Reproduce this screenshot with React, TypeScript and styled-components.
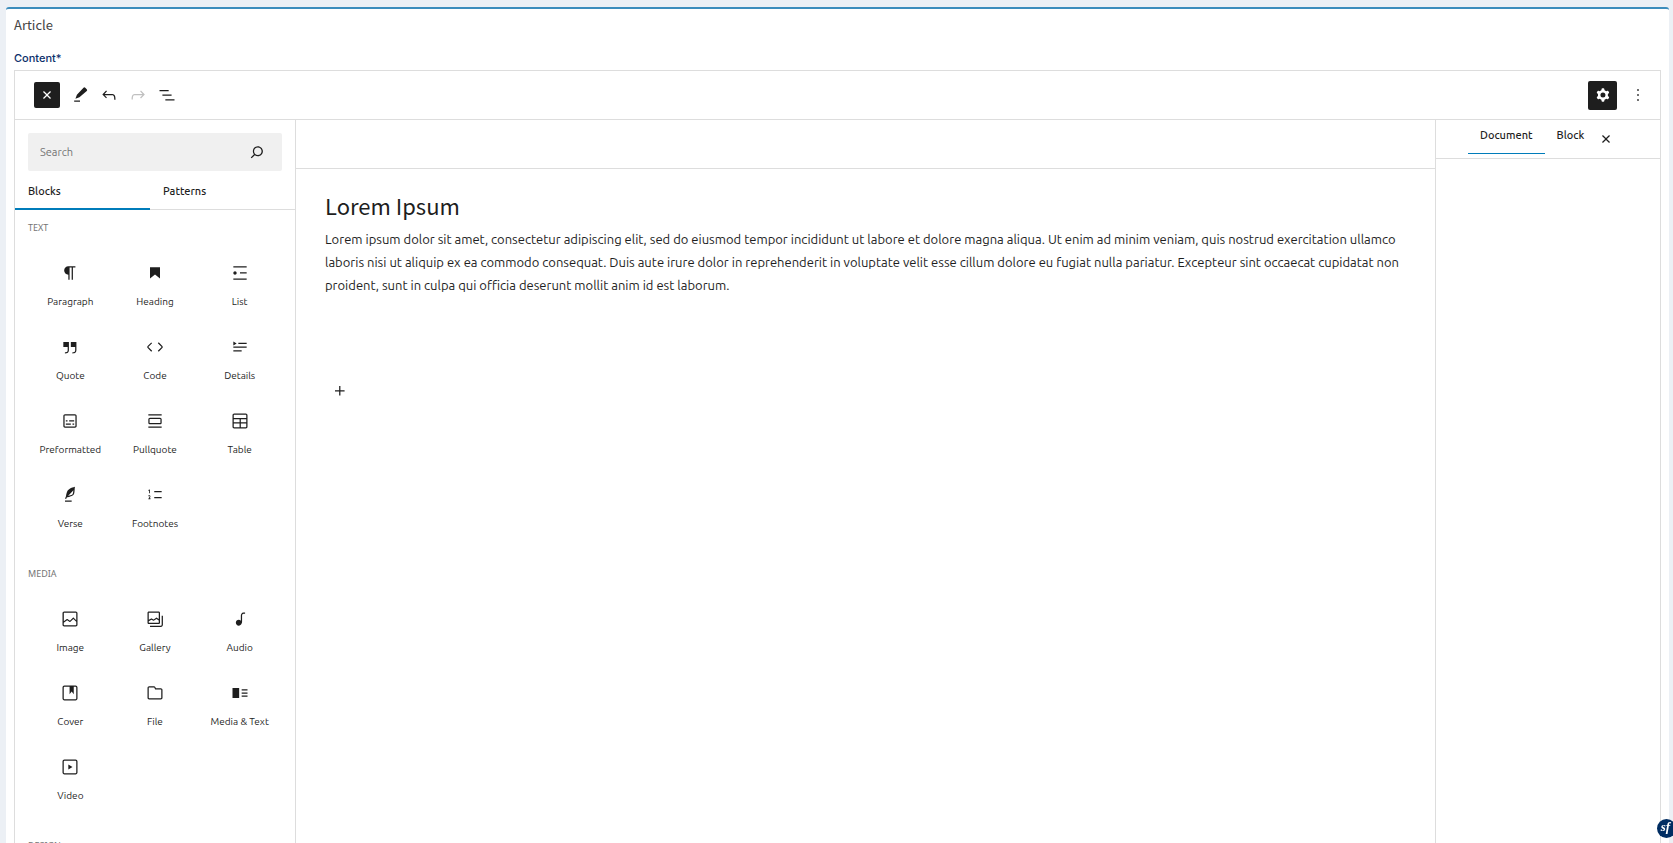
import React from 'react';
import styled, { createGlobalStyle } from 'styled-components';

const UI_FONT = "Ubuntu, 'Noto Sans', 'Open Sans', sans-serif";
const HEADING_FONT = "'Source Sans Pro', 'Noto Sans CJK SC', 'Noto Sans', sans-serif";
const CAPTION_FONT = "'Liberation Sans Narrow', 'Noto Sans', sans-serif";
const LABEL_FONT = 'Inter, Roboto, sans-serif';

const ink = '#1e1e1e';
const line = '#dddddd';
const accent = '#007cba';

const GlobalStyle = createGlobalStyle`
  *, *::before, *::after { box-sizing: border-box; }
  body { margin: 0; background: #ecf0f5; color: ${ink}; font-family: ${UI_FONT}; }
  button, input { font-family: inherit; }
  h1, h2, h3, p { margin: 0; font-weight: 400; }
`;

const Page = styled.div`
  display: flex;
  height: 100vh;
  padding: 7px 4px 0 6px;
  overflow: hidden;
`;

const Card = styled.main`
  display: flex;
  flex: 1;
  flex-direction: column;
  min-width: 0;
  padding: 6px 8px 0;
  background: #fff;
  border-top: 2px solid #3c8dbc;
  border-radius: 3px 3px 0 0;
`;

const CardTitle = styled.h1`
  color: #444;
  font: 400 13px/20px ${HEADING_FONT};
`;

const FieldLabel = styled.h2`
  margin-top: 14px;
  padding-bottom: 3px;
  color: #0b2f6b;
  font: 500 11px/18px ${LABEL_FONT};
`;

const Editor = styled.section`
  display: flex;
  flex: 1;
  flex-direction: column;
  min-height: 0;
  border: 1px solid ${line};
  border-bottom: 0;
`;

const Toolbar = styled.div`
  display: flex;
  flex-shrink: 0;
  align-items: center;
  height: 49px;
  padding: 0 12px 0 19px;
  border-bottom: 1px solid ${line};
`;

const ToolGroup = styled.div`
  display: flex;
  align-items: center;
  gap: 9px;
  margin-left: 10px;
`;

const EndGroup = styled(ToolGroup)`
  gap: 11px;
  margin-left: auto;
`;

const IconButton = styled.button<{ $size?: number; $filled?: boolean }>`
  display: flex;
  flex-shrink: 0;
  align-items: center;
  justify-content: center;
  width: ${({ $size = 20 }) => $size}px;
  height: ${({ $size = 20 }) => $size}px;
  padding: 0;
  background: ${({ $filled }) => ($filled ? ink : 'transparent')};
  border: 0;
  border-radius: 2px;
  color: ${({ $filled }) => ($filled ? '#fff' : ink)};

  &:disabled { color: #c0c0c0; }
`;

const Glyph = styled.svg`
  display: block;
  fill: currentColor;
`;

const Workspace = styled.div`
  display: flex;
  flex: 1;
  min-height: 0;
`;

const Inserter = styled.aside`
  flex: 0 0 281px;
  overflow: hidden;
  border-right: 1px solid ${line};
`;

const SearchBox = styled.div`
  display: flex;
  align-items: center;
  height: 38px;
  margin: 13px 13px 0;
  padding: 0 15px 0 12px;
  background: #f0f0f0;
  border-radius: 2px;
`;

const SearchInput = styled.input`
  flex: 1;
  min-width: 0;
  padding: 0;
  background: transparent;
  border: 0;
  outline: 0;
  color: ${ink};
  font-size: 11px;

  &::placeholder { color: #757575; opacity: 1; }
`;

const InserterTabs = styled.div`
  display: flex;
  height: 39px;
  box-shadow: inset 0 -1px ${line};
`;

const InserterTab = styled.button<{ $active?: boolean }>`
  width: 135px;
  padding: 3px 13px 0;
  background: transparent;
  border: 0;
  border-bottom: 2px solid ${({ $active }) => ($active ? accent : 'transparent')};
  color: ${ink};
  font-size: 11px;
  font-weight: 500;
  text-align: left;
`;

const Group = styled.section`
  padding-bottom: 13px;
`;

const GroupTitle = styled.h3`
  height: 37px;
  padding: 11px 13px 0;
  color: #757575;
  font: 400 9px/14px ${CAPTION_FONT};
  text-transform: uppercase;
`;

const BlockGrid = styled.ul`
  display: grid;
  grid-template-columns: repeat(3, 1fr);
  grid-auto-rows: 74px;
  margin: 0;
  padding: 0 13px;
  list-style: none;
`;

const BlockButton = styled.button`
  display: flex;
  flex-direction: column;
  align-items: center;
  width: 100%;
  height: 74px;
  padding: 16px 0 0;
  background: transparent;
  border: 0;
  color: ${ink};
  font-size: 10px;
  line-height: 14px;
  white-space: nowrap;
`;

const BlockName = styled.span`
  margin-top: 12px;
`;

const Canvas = styled.div`
  flex: 1;
  min-width: 0;
`;

const CanvasBar = styled.div`
  height: 49px;
  border-bottom: 1px solid ${line};
`;

const Content = styled.article`
  padding: 20px 29px;
`;

const ContentTitle = styled.h2`
  font: 400 22px/32px ${HEADING_FONT};
`;

const Paragraph = styled.p`
  margin-top: 7px;
  font-size: 13px;
  line-height: 23px;
`;

const Appender = styled.div`
  padding: 84px 5px 0;
`;

const Settings = styled.aside`
  flex: 0 0 225px;
  border-left: 1px solid ${line};
`;

const SettingsTabs = styled.div`
  display: flex;
  align-items: flex-start;
  height: 39px;
  padding-left: 32px;
  border-bottom: 1px solid ${line};
`;

const SettingsTab = styled.button<{ $active?: boolean }>`
  height: 34px;
  padding: 0 12px 3px;
  background: transparent;
  border: 0;
  border-bottom: 1px solid ${({ $active }) => ($active ? accent : 'transparent')};
  color: ${ink};
  font-size: 11px;
  font-weight: 500;
`;

const SettingsClose = styled.div`
  padding-top: 9px;
`;

const ProfilerBadge = styled.button`
  position: fixed;
  right: -3px;
  bottom: 5px;
  width: 19px;
  height: 19px;
  padding: 0 2px 3px 0;
  background: #002d62;
  border: 0;
  border-radius: 50%;
  color: #fff;
  font: italic 700 13px/14px 'Liberation Serif', serif;
`;

const paths = {
  close: 'M12 13.06l3.712 3.713 1.061-1.06L13.061 12l3.712-3.712-1.06-1.06L12 10.938 8.288 7.227l-1.061 1.06L10.939 12l-3.712 3.712 1.06 1.061L12 13.061z',
  edit: 'm20.1 5.1-1.8-1.8a1.5 1.5 0 0 0-2.1 0L8.3 11.7 6.5 16.5l4.8-1.8 8.8-7.5a1.5 1.5 0 0 0 0-2.1ZM12 18.5H5V20h7v-1.5Z',
  undo: 'M18.3 11.7c-.6-.6-1.4-.9-2.3-.9H6.7l2.9-3.3-1.1-1-4.5 5L8.5 16l1-1-2.7-2.7H16c.5 0 .9.2 1.3.5 1 1 1 3.4 1 4.5v.3h1.5v-.2c0-1.5 0-4.3-1.5-5.7z',
  redo: 'M15.6 6.5l-1.1 1 2.9 3.3H8c-.9 0-1.7.3-2.3.9-1.4 1.5-1.4 4.2-1.4 5.6v.2h1.5v-.3c0-1.1 0-3.5 1-4.5.3-.3.7-.5 1.3-.5h9.2L14.5 15l1.1 1.1 4.6-4.6-4.6-5z',
  outline: 'M3 6h11v1.5H3V6Zm3.5 5.5h11V13h-11v-1.5ZM21 17H10v1.5h11V17Z',
  cog: 'M10.289 4.836A1 1 0 0111.275 4h1.306a1 1 0 01.987.836l.244 1.466c.787.26 1.503.679 2.108 1.218l1.393-.522a1 1 0 011.216.437l.653 1.13a1 1 0 01-.23 1.273l-1.148.944a6.025 6.025 0 010 2.435l1.149.946a1 1 0 01.23 1.272l-.653 1.13a1 1 0 01-1.216.437l-1.394-.522c-.605.54-1.32.958-2.108 1.218l-.244 1.466a1 1 0 01-.987.836h-1.306a1 1 0 01-.986-.836l-.244-1.466a5.995 5.995 0 01-2.108-1.218l-1.394.522a1 1 0 01-1.217-.436l-.653-1.131a1 1 0 01.23-1.272l1.149-.946a6.026 6.026 0 010-2.435l-1.148-.944a1 1 0 01-.23-1.272l.653-1.131a1 1 0 011.217-.437l1.393.522a5.994 5.994 0 012.108-1.218l.244-1.466zM14.929 12a3 3 0 11-6 0 3 3 0 016 0z',
  more: 'M13 19h-2v-2h2v2zm0-6h-2v-2h2v2zm0-6h-2V5h2v2z',
  search: 'M13 5c-3.3 0-6 2.7-6 6 0 1.4.5 2.7 1.3 3.7l-3.8 3.8 1.1 1.1 3.8-3.8c1 .8 2.3 1.3 3.7 1.3 3.3 0 6-2.7 6-6S16.3 5 13 5zm0 10.5c-2.5 0-4.5-2-4.5-4.5s2-4.5 4.5-4.5 4.5 2 4.5 4.5-2 4.5-4.5 4.5z',
  plus: 'M11 12.5V17.5H12.5V12.5H17.5V11H12.5V6H11V11H6V12.5H11Z',
  paragraph: 'm9.99609 14v-.2251l.00391.0001v6.225h1.5v-14.5h2.5v14.5h1.5v-14.5h3v-1.5h-8.50391c-2.76142 0-5 2.23858-5 5 0 2.7614 2.23858 5 5 5z',
  heading: 'M6 5V18.5911L12 13.8473L18 18.5911V5H6Z',
  list: 'M4 4v1.5h16V4H4zm8 8.5h8V11h-8v1.5zM4 20h16v-1.5H4V20zm4-8c0-1.1-.9-2-2-2s-2 .9-2 2 .9 2 2 2 2-.9 2-2z',
  quote: 'M13 6v6h5.2v4c0 .8-.2 1.4-.5 1.7-.6.6-1.6.6-2.5.5h-.3v1.5h.5c1 0 2.3-.1 3.3-1 .6-.6 1-1.6 1-2.8V6H13zm-9 6h5.2v4c0 .8-.2 1.4-.5 1.7-.6.6-1.6.6-2.5.5h-.3v1.5h.5c1 0 2.3-.1 3.3-1 .6-.6 1-1.6 1-2.8V6H4v6z',
  code: 'M20.8 10.7l-4.3-4.3-1.1 1.1 4.3 4.3c.1.1.1.3 0 .4l-4.3 4.3 1.1 1.1 4.3-4.3c.7-.8.7-1.9 0-2.6zM4.2 11.8l4.3-4.3-1-1-4.3 4.3c-.7.7-.7 1.8 0 2.5l4.3 4.3 1.1-1.1-4.3-4.3c-.2-.1-.2-.3-.1-.4z',
  details: 'M4 16h10v1.5H4V16Zm0-4.5h16V13H4v-1.5ZM10 7h10v1.5H10V7Zm-6-1.75 4 2.5-4 2.5v-5Z',
  preformatted: 'M18 4H6c-1.1 0-2 .9-2 2v12c0 1.1.9 2 2 2h12c1.1 0 2-.9 2-2V6c0-1.1-.9-2-2-2zm.5 14c0 .3-.2.5-.5.5H6c-.3 0-.5-.2-.5-.5V6c0-.3.2-.5.5-.5h12c.3 0 .5.2.5.5v12zM7 16.5h6V15H7v1.5zm4-4h6V11h-6v1.5zM9 11H7v1.5h2V11zm6 5.5h2V15h-2v1.5z',
  pullquote: 'M18 8H6c-1.1 0-2 .9-2 2v4c0 1.1.9 2 2 2h12c1.1 0 2-.9 2-2v-4c0-1.1-.9-2-2-2zm.5 6c0 .3-.2.5-.5.5H6c-.3 0-.5-.2-.5-.5v-4c0-.3.2-.5.5-.5h12c.3 0 .5.2.5.5v4zM4 4v1.5h16V4H4zm0 16h16v-1.5H4V20z',
  table: 'M19 3H5c-1.1 0-2 .9-2 2v14c0 1.1.9 2 2 2h14c1.1 0 2-.9 2-2V5c0-1.1-.9-2-2-2zM5 4.5h14c.3 0 .5.2.5.5v3.5h-15V5c0-.3.2-.5.5-.5zm8 5.5h6.5v3.5H13V10zm-1.5 3.5h-7V10h7v3.5zm-7 5.5v-4h7v4.5H5c-.3 0-.5-.2-.5-.5zm14.5.5h-6V15h6.5v4c0 .3-.2.5-.5.5z',
  verse: 'M17.8 2l-.9.3c-.1 0-3.6 1-5.2 2.1C10 5.5 9.3 6.5 8.9 7.1c-.6.9-1.7 4.7-1.7 6.3l-.9 2.3c-.2.4 0 .8.4 1 .1 0 .2.1.3.1.3 0 .6-.2.7-.5l.6-1.5c.3 0 .7-.1 1.2-.2.7-.1 1.4-.3 2.2-.5.8-.2 1.6-.5 2.4-.8.7-.3 1.4-.7 1.9-1.2s.8-1.2 1-1.9c.2-.7.3-1.6.4-2.4.1-.8.1-1.7.2-2.5 0-.8.1-1.5.2-2.1V2zm-1.9 5.6c-.1.8-.2 1.5-.3 2.1-.2.6-.4 1-.6 1.3-.3.3-.8.6-1.4.9-.7.3-1.4.5-2.2.8-.6.2-1.3.3-1.8.4L15 7.5c.3-.3.6-.7 1-1.1 0 .4 0 .8-.1 1.2zM6 20h8v-1.5H6V20z',
  footnotes: 'M11.1 15.8H20v-1.5h-8.9v1.5zm0-8.6v1.5H20V7.2h-8.9zM5 6.7V10h1V5.3L3.8 6l.4 1 .8-.3zm-.4 5.7c-.3.1-.5.2-.7.3l.1 1.1c.2-.2.5-.4.8-.5.3-.1.6 0 .7.1.2.3 0 .8-.2 1.1-.5.8-.9 1.6-1.4 2.5h2.7v-1h-1c.3-.6.8-1.4.9-2.1.1-.3 0-.8-.2-1.1-.5-.6-1.3-.5-1.7-.4z',
  image: 'M19 3H5c-1.1 0-2 .9-2 2v14c0 1.1.9 2 2 2h14c1.1 0 2-.9 2-2V5c0-1.1-.9-2-2-2zM5 4.5h14c.3 0 .5.2.5.5v8.4l-3-2.9c-.3-.3-.8-.3-1 0L11.9 14 9 12c-.3-.2-.6-.2-.8 0l-3.6 2.6V5c-.1-.3.1-.5.4-.5zm14 15H5c-.3 0-.5-.2-.5-.5v-2.4l4.1-3 3 1.9c.3.2.7.2.9-.1L16 12l3.5 3.4V19c0 .3-.2.5-.5.5z',
  gallery: 'M16.375 4.5H4.625a.125.125 0 0 0-.125.125v8.254l2.859-1.54a.75.75 0 0 1 .68-.016l2.384 1.142 2.89-2.074a.75.75 0 0 1 .874 0l2.313 1.66V4.625a.125.125 0 0 0-.125-.125Zm.125 9.398-2.75-1.975-2.813 2.02a.75.75 0 0 1-.76.067l-2.444-1.17L4.5 14.583v1.792c0 .069.056.125.125.125h11.75a.125.125 0 0 0 .125-.125v-2.477ZM4.625 3C3.728 3 3 3.728 3 4.625v11.75C3 17.273 3.728 18 4.625 18h11.75c.898 0 1.625-.727 1.625-1.625V4.625C18 3.728 17.273 3 16.375 3H4.625ZM20 8v11c0 .69-.31 1-.999 1H6v1.5h13.001c1.52 0 2.499-.982 2.499-2.5V8H20Z',
  audio: 'M17.7 4.3c-1.2 0-2.8 0-3.8 1-.6.6-.9 1.5-.9 2.6V14c-.6-.6-1.5-1-2.5-1C8.6 13 7 14.6 7 16.5S8.6 20 10.5 20c1.5 0 2.8-1 3.3-2.3.5-.8.7-1.8.7-2.5V7.9c0-.7.2-1.2.5-1.6.6-.6 1.8-.6 2.8-.6h.3V4.3h-.4z',
  cover: 'M18.7 3H5.3C4 3 3 4 3 5.3v13.4C3 20 4 21 5.3 21h13.4c1.3 0 2.3-1 2.3-2.3V5.3C21 4 20 3 18.7 3zm.8 15.7c0 .4-.4.8-.8.8H5.3c-.4 0-.8-.4-.8-.8V5.3c0-.4.4-.8.8-.8h6.2v8.9l2.5-3.1 2.5 3.1V4.5h2.2c.4 0 .8.4.8.8v13.4z',
  file: 'M19 6.2h-5.9l-.6-1.1c-.3-.7-1-1.1-1.8-1.1H5c-1.1 0-2 .9-2 2v11.8c0 1.1.9 2 2 2h14c1.1 0 2-.9 2-2V8.2c0-1.1-.9-2-2-2zm.5 11.6c0 .3-.2.5-.5.5H5c-.3 0-.5-.2-.5-.5V6c0-.3.2-.5.5-.5h5.8c.2 0 .4.1.4.3l1 2H19c.3 0 .5.2.5.5v9.5z',
  mediaText: 'M3 18h8V6H3v12zM14 7.5V9h7V7.5h-7zm0 5.3h7v-1.5h-7v1.5zm0 3.7h7V15h-7v1.5z',
  video: 'M18.7 3H5.3C4 3 3 4 3 5.3v13.4C3 20 4 21 5.3 21h13.4c1.3 0 2.3-1 2.3-2.3V5.3C21 4 20 3 18.7 3zm.8 15.7c0 .4-.4.8-.8.8H5.3c-.4 0-.8-.4-.8-.8V5.3c0-.4.4-.8.8-.8h13.4c.4 0 .8.4.8.8v13.4zM10 15l5-3-5-3v6z',
};

type IconName = keyof typeof paths;

const evenOdd: IconName[] = ['cog', 'gallery'];

const Icon = ({ name }: { name: IconName }) => (
  <Glyph width="20" height="20" viewBox="0 0 24 24" aria-hidden="true">
    <path d={paths[name]} fillRule={evenOdd.includes(name) ? 'evenodd' : undefined} />
  </Glyph>
);

const groups: { title: string; blocks: [IconName, string][] }[] = [
  {
    title: 'Text',
    blocks: [
      ['paragraph', 'Paragraph'],
      ['heading', 'Heading'],
      ['list', 'List'],
      ['quote', 'Quote'],
      ['code', 'Code'],
      ['details', 'Details'],
      ['preformatted', 'Preformatted'],
      ['pullquote', 'Pullquote'],
      ['table', 'Table'],
      ['verse', 'Verse'],
      ['footnotes', 'Footnotes'],
    ],
  },
  {
    title: 'Media',
    blocks: [
      ['image', 'Image'],
      ['gallery', 'Gallery'],
      ['audio', 'Audio'],
      ['cover', 'Cover'],
      ['file', 'File'],
      ['mediaText', 'Media & Text'],
      ['video', 'Video'],
    ],
  },
  { title: 'Design', blocks: [] },
];

export default function App() {
  return (
    <>
      <GlobalStyle />
      <Page>
        <Card>
          <CardTitle>Article</CardTitle>
          <FieldLabel id="content-label">Content*</FieldLabel>
          <Editor aria-labelledby="content-label">
            <Toolbar>
              <IconButton $size={26} $filled aria-label="Close block inserter">
                <Icon name="close" />
              </IconButton>
              <ToolGroup>
                <IconButton aria-label="Tools"><Icon name="edit" /></IconButton>
                <IconButton aria-label="Undo"><Icon name="undo" /></IconButton>
                <IconButton aria-label="Redo" disabled><Icon name="redo" /></IconButton>
                <IconButton aria-label="Document overview"><Icon name="outline" /></IconButton>
              </ToolGroup>
              <EndGroup>
                <IconButton $size={29} $filled aria-label="Settings"><Icon name="cog" /></IconButton>
                <IconButton aria-label="Options"><Icon name="more" /></IconButton>
              </EndGroup>
            </Toolbar>
            <Workspace>
              <Inserter>
                <SearchBox>
                  <SearchInput type="text" placeholder="Search" aria-label="Search blocks" />
                  <IconButton aria-label="Search"><Icon name="search" /></IconButton>
                </SearchBox>
                <InserterTabs role="tablist">
                  <InserterTab role="tab" aria-selected $active>Blocks</InserterTab>
                  <InserterTab role="tab" aria-selected={false}>Patterns</InserterTab>
                </InserterTabs>
                {groups.map(({ title, blocks }) => (
                  <Group key={title}>
                    <GroupTitle>{title}</GroupTitle>
                    <BlockGrid>
                      {blocks.map(([icon, name]) => (
                        <li key={name}>
                          <BlockButton>
                            <Icon name={icon} />
                            <BlockName>{name}</BlockName>
                          </BlockButton>
                        </li>
                      ))}
                    </BlockGrid>
                  </Group>
                ))}
              </Inserter>
              <Canvas>
                <CanvasBar />
                <Content>
                  <ContentTitle>Lorem Ipsum</ContentTitle>
                  <Paragraph>
                    Lorem ipsum dolor sit amet, consectetur adipiscing elit, sed do eiusmod tempor
                    incididunt ut labore et dolore magna aliqua. Ut enim ad minim veniam, quis nostrud
                    exercitation ullamco laboris nisi ut aliquip ex ea commodo consequat. Duis aute
                    irure dolor in reprehenderit in voluptate velit esse cillum dolore eu fugiat nulla
                    pariatur. Excepteur sint occaecat cupidatat non proident, sunt in culpa qui officia
                    deserunt mollit anim id est laborum.
                  </Paragraph>
                  <Appender>
                    <IconButton aria-label="Add block"><Icon name="plus" /></IconButton>
                  </Appender>
                </Content>
              </Canvas>
              <Settings>
                <SettingsTabs>
                  <SettingsTab $active>Document</SettingsTab>
                  <SettingsTab>Block</SettingsTab>
                  <SettingsClose>
                    <IconButton aria-label="Close settings"><Icon name="close" /></IconButton>
                  </SettingsClose>
                </SettingsTabs>
              </Settings>
            </Workspace>
          </Editor>
        </Card>
      </Page>
      <ProfilerBadge aria-label="Symfony profiler">sf</ProfilerBadge>
    </>
  );
}
